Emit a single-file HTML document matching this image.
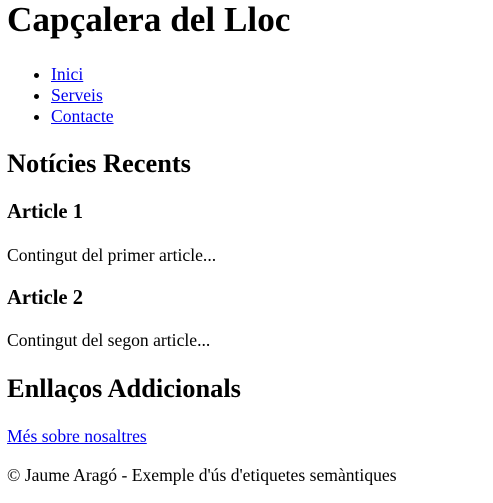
<!DOCTYPE html>
<html><head><meta charset="utf-8"><style>
html{font-size:17.6px}
body{margin:0 7px;font-family:"Liberation Serif",serif;font-size:17.6px;color:#000;background:#fff}
h1{margin-top:0}
ul{padding-left:44px}
a{color:#0000ee}
</style></head><body>
<header><h1>Capçalera del Lloc</h1>
<nav><ul><li><a href="#">Inici</a></li><li><a href="#">Serveis</a></li><li><a href="#">Contacte</a></li></ul></nav></header>
<main><section><h2>Notícies Recents</h2>
<article><h3>Article 1</h3><p>Contingut del primer article...</p></article>
<article><h3>Article 2</h3><p>Contingut del segon article...</p></article></section>
<aside><h2>Enllaços Addicionals</h2><p><a href="#">Més sobre nosaltres</a></p></aside></main>
<footer><p>© Jaume Aragó - Exemple d'ús d'etiquetes semàntiques</p></footer>
</body></html>
